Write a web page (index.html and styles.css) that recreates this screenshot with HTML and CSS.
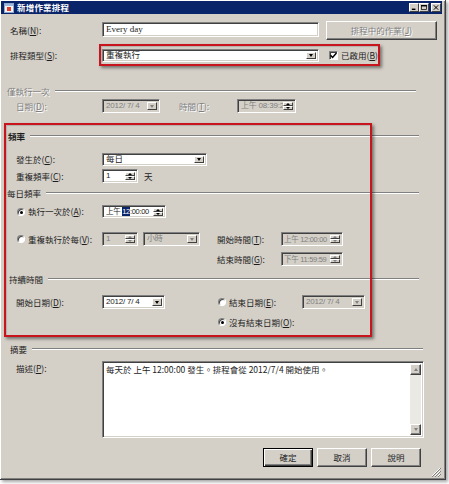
FILE: index.html
```html
<!DOCTYPE html>
<html lang="zh-Hant">
<head>
<meta charset="utf-8">
<title>新增作業排程</title>
<link rel="stylesheet" href="styles.css">
</head>
<body>
<div class="window">
  <div class="titlebar">
    <svg class="app-icon" width="10" height="10" viewBox="0 0 10 10">
      <rect x="0.5" y="0.5" width="9" height="9" fill="#f4f4f4" stroke="#8fa8d0"/>
      <rect x="1" y="1" width="8" height="2" fill="#9fb8e0"/>
      <rect x="3" y="4" width="4" height="4" fill="#e0402a"/>
    </svg>
    <span class="title">新增作業排程</span>
    <div class="caption">
      <span class="cap-btn"><svg width="8" height="7" viewBox="0 0 8 7"><rect x="1" y="5" width="5" height="2" fill="#000"/></svg></span>
      <span class="cap-btn"><svg width="8" height="7" viewBox="0 0 8 7"><rect x="0.5" y="0.5" width="7" height="6" fill="none" stroke="#000"/><rect x="0" y="0" width="8" height="2" fill="#000"/></svg></span>
      <span class="cap-btn close"><svg width="8" height="7" viewBox="0 0 8 7"><path d="M1 0.5 L7 6.5 M7 0.5 L1 6.5" stroke="#000" stroke-width="1.4"/></svg></span>
    </div>
  </div>

  <div class="client">
    <div class="row top r-name">
      <span class="lbl">名稱(<u>N</u>):</span>
      <div class="field name-field"><span class="serif">Every day</span></div>
      <span class="btn btn-jobs disabled">排程中的作業(<u>J</u>)</span>
    </div>

    <div class="row top r-type">
      <span class="lbl">排程類型(<u>S</u>):</span>
      <div class="field combo type-combo">
        <span class="val">重複執行</span>
        <span class="drop"><i class="tri"></i></span>
      </div>
      <span class="check checked">
        <svg width="7" height="7" viewBox="0 0 7 7"><path d="M0.5 3.2 L2.6 5.4 L6.5 1" fill="none" stroke="#000" stroke-width="1.5"/></svg>
      </span>
      <span class="check-text">已啟用(<u>B</u>)</span>
    </div>

    <div class="section s-once disabled">
      <span class="sec-title">僅執行一次</span><span class="rule"></span>
    </div>

    <div class="row r-once">
      <span class="lbl disabled">日期(<u>D</u>):</span>
      <div class="field combo off date-once">
        <span class="val">2012/ 7/ 4</span>
        <span class="drop"><i class="tri grey"></i></span>
      </div>
      <span class="lbl lbl-time disabled">時間(<u>T</u>):</span>
      <div class="field spin off time-once">
        <span class="val">上午 08:39:2</span>
        <span class="spin-btns"><span class="sb"><i class="up"></i></span><span class="sb"><i class="dn"></i></span></span>
      </div>
    </div>

    <div class="section s-freq">
      <span class="sec-title bold">頻率</span><span class="rule"></span>
    </div>

    <div class="row r-occurs">
      <span class="lbl">發生於(<u>C</u>):</span>
      <div class="field combo occurs-combo">
        <span class="val">每日</span>
        <span class="drop"><i class="tri"></i></span>
      </div>
    </div>

    <div class="row r-recur">
      <span class="lbl">重複頻率(<u>C</u>):</span>
      <div class="field spin num-spin">
        <span class="val">1</span>
        <span class="spin-btns"><span class="sb"><i class="up"></i></span><span class="sb"><i class="dn"></i></span></span>
      </div>
      <span class="unit">天</span>
    </div>

    <div class="section s-daily">
      <span class="sec-title">每日頻率</span><span class="rule"></span>
    </div>

    <div class="row r-at">
      <span class="lbl radio-lbl"><span class="radio checked"></span>執行一次於(<u>A</u>):</span>
      <div class="field spin at-time">
        <span class="val">上午 <span class="sel">12</span>:00:00</span>
        <span class="spin-btns"><span class="sb"><i class="up"></i></span><span class="sb"><i class="dn"></i></span></span>
      </div>
    </div>

    <div class="row r-every">
      <span class="lbl radio-lbl"><span class="radio"></span>重複執行於每(<u>V</u>):</span>
      <div class="field spin off num-spin">
        <span class="val">1</span>
        <span class="spin-btns"><span class="sb"><i class="up grey"></i></span><span class="sb"><i class="dn grey"></i></span></span>
      </div>
      <div class="field combo off unit-combo">
        <span class="val">小時</span>
        <span class="drop"><i class="tri grey"></i></span>
      </div>
      <span class="lbl lbl-range">開始時間(<u>T</u>):</span>
      <div class="field spin off range-time">
        <span class="val">上午 12:00:00</span>
        <span class="spin-btns"><span class="sb"><i class="up grey"></i></span><span class="sb"><i class="dn grey"></i></span></span>
      </div>
    </div>

    <div class="row r-end-time">
      <span class="lbl lbl-range">結束時間(<u>G</u>):</span>
      <div class="field spin off range-time">
        <span class="val">下午 11:59:59</span>
        <span class="spin-btns"><span class="sb"><i class="up grey"></i></span><span class="sb"><i class="dn grey"></i></span></span>
      </div>
    </div>

    <div class="section s-duration">
      <span class="sec-title">持續時間</span><span class="rule"></span>
    </div>

    <div class="row r-start">
      <span class="lbl">開始日期(<u>D</u>):</span>
      <div class="field combo date-combo">
        <span class="val">2012/ 7/ 4</span>
        <span class="drop"><i class="tri"></i></span>
      </div>
      <span class="radio-lbl end-lbl"><span class="radio"></span>結束日期(<u>E</u>):</span>
      <div class="field combo off date-combo">
        <span class="val">2012/ 7/ 4</span>
        <span class="drop"><i class="tri grey"></i></span>
      </div>
    </div>

    <div class="row r-noend">
      <span class="radio-lbl"><span class="radio checked"></span>沒有結束日期(<u>O</u>):</span>
    </div>

    <div class="section s-summary">
      <span class="sec-title">摘要</span><span class="rule"></span>
    </div>

    <div class="row r-desc">
      <span class="lbl desc-lbl">描述(<u>P</u>):</span>
      <div class="field memo">
        <p class="memo-text">每天於 上午 12:00:00 發生。排程會從 2012/7/4 開始使用。</p>
        <div class="vscroll">
          <span class="sbtn"><i class="up grey"></i></span>
          <span class="track"></span>
          <span class="sbtn"><i class="dn grey"></i></span>
        </div>
      </div>
    </div>

    <div class="row r-actions">
      <span class="btn btn-act default">確定</span>
      <span class="btn btn-act">取消</span>
      <span class="btn btn-act">說明</span>
    </div>
  </div>

  <!-- highlight frames drawn over the dialog -->
  <div class="mark mark-type"></div>
  <div class="mark mark-freq"></div>

  <svg class="grip" width="10" height="10" viewBox="0 0 10 10">
    <path d="M9 1 L1 9 M9 4 L4 9 M9 7 L7 9" stroke="#fff" stroke-width="1"/>
    <path d="M10 1 L1 10 M10 4 L4 10 M10 7 L7 10" stroke="#808080" stroke-width="1"/>
  </svg>
</div>
</body>
</html>
```
FILE: styles.css
```css
* { box-sizing: border-box; }

html, body {
  margin: 0;
  background: #fff;
}

body {
  width: 449px;
  height: 484px;
  overflow: hidden;
  font-family: "Noto Sans CJK TC", "Noto Sans", sans-serif;
  font-size: 8.5px;
  line-height: 1.2;
  color: #1c1c1c;
}

u { text-decoration: underline; text-underline-offset: 1px; }

/* ---------- window frame ---------- */
.window {
  position: relative;
  width: 446px;
  height: 480px;
  background: #d4d0c8;
  border-right: 1px solid #404040;
  border-bottom: 1px solid #404040;
  box-shadow: inset 1px 1px #fff, inset -1px -1px #808080, 2px 2px 3px rgba(0, 0, 0, 0.35);
  padding: 1px 3px 0 1px;
  display: flex;
  flex-direction: column;
}

.titlebar {
  height: 13px;
  flex: none;
  background: #0a246a;
  color: #fff;
  display: flex;
  align-items: center;
  padding-left: 3px;
}

.app-icon { flex: none; }

.title {
  margin-left: 3px;
  font-weight: bold;
  letter-spacing: 0.2px;
}

.caption {
  margin-left: auto;
  margin-right: 1px;
  display: flex;
}

.cap-btn {
  width: 10px;
  height: 9px;
  background: #d4d0c8;
  border: 1px solid;
  border-color: #fff #404040 #404040 #fff;
  display: flex;
  align-items: center;
  justify-content: center;
}

.cap-btn svg { width: 6px; height: 5px; }
.cap-btn.close { margin-left: 2px; }

/* ---------- layout ---------- */
.client {
  flex: 1;
  display: flex;
  flex-direction: column;
}

.row {
  display: flex;
  align-items: center;
  padding-left: 15px;
  flex: none;
}

.row.top { padding-left: 9px; }

.lbl {
  flex: none;
  width: 86px;
  white-space: nowrap;
}

.row.top .lbl { width: 92px; }

.disabled { color: #808080; text-shadow: 1px 1px 0 #fff; }

.section {
  display: flex;
  align-items: center;
  height: 12px;
  padding-left: 6px;
  padding-right: 23px;
  flex: none;
}

.sec-title { white-space: nowrap; }
.bold { font-weight: bold; }

.rule {
  flex: 1;
  margin-left: 5px;
  height: 2px;
  border-top: 1px solid #808080;
  border-bottom: 1px solid #fff;
}

/* vertical rhythm of the form */
.r-name { margin-top: 7px; height: 19px; }
.r-type { margin-top: 5px; height: 20px; }
.s-once { margin-top: 20px; padding-right: 26px; }
.r-once { margin-top: 2px; height: 14px; }
.s-freq { margin-top: 17px; padding-left: 7px; }
.r-occurs { margin-top: 11px; height: 13px; }
.r-recur { margin-top: 3px; height: 14px; }
.s-daily { margin-top: 4px; }
.r-at { margin-top: 6px; height: 13px; }
.r-every { margin-top: 14px; height: 14px; }
.r-end-time { margin-top: 6px; height: 14px; padding-left: 216px; }
.s-duration { margin-top: 7px; padding-left: 8px; }
.r-start { margin-top: 10px; height: 14px; }
.r-noend { margin-top: 6px; height: 14px; padding-left: 216px; }
.s-summary { margin-top: 14px; padding-left: 9px; padding-right: 19px; }
.r-desc { margin-top: 6px; height: 77px; align-items: flex-start; }
.r-actions { margin-top: 10px; height: 19px; justify-content: flex-end; padding-right: 21px; gap: 4px; }

/* ---------- controls ---------- */
.field {
  flex: none;
  display: flex;
  align-items: center;
  background: #fff;
  border: 1px solid;
  border-color: #808080 #fff #fff #808080;
  box-shadow: inset 1px 1px #404040, inset -1px -1px #d4d0c8;
  padding: 0 2px 0 3px;
  white-space: nowrap;
  overflow: hidden;
}

.field.off { background: #d4d0c8; color: #808080; }

.serif {
  font-family: "Liberation Serif", "Noto Sans CJK TC", serif;
  font-size: 9px;
}

.name-field { width: 217px; height: 15px; align-self: flex-start; margin-top: 1px; }

.btn {
  flex: none;
  height: 19px;
  display: flex;
  align-items: center;
  justify-content: center;
  background: #d4d0c8;
  border: 1px solid;
  border-color: #fff #404040 #404040 #fff;
  box-shadow: inset -1px -1px #808080;
}

.btn-jobs { width: 111px; margin-left: 7px; }
.btn-act { width: 50px; }

.btn.default {
  border-color: #000;
  box-shadow: inset 1px 1px #fff, inset -1px -1px #404040, inset -2px -2px #808080;
}

.combo { padding-right: 2px; }

.val {
  flex: 1;
  overflow: hidden;
  font-family: "Liberation Sans", "Noto Sans CJK TC", sans-serif;
  font-size: 8px;
  letter-spacing: -0.2px;
}

.drop {
  flex: none;
  width: 10px;
  margin: 2px 0;
  height: calc(100% - 4px);
  background: #d4d0c8;
  border: 1px solid;
  border-color: #fff #404040 #404040 #fff;
  display: flex;
  align-items: center;
  justify-content: center;
}

.tri, .dn, .up {
  display: block;
  width: 0;
  height: 0;
  border-left: 2.5px solid transparent;
  border-right: 2.5px solid transparent;
}

.tri, .dn { border-top: 3px solid #000; }
.up { border-bottom: 3px solid #000; }
.tri.grey, .dn.grey { border-top-color: #808080; }
.up.grey { border-bottom-color: #808080; }

.spin { padding-right: 2px; }

.spin-btns {
  flex: none;
  width: 10px;
  height: calc(100% - 4px);
  display: flex;
  flex-direction: column;
}

.sb {
  flex: 1;
  background: #d4d0c8;
  border: 1px solid;
  border-color: #fff #404040 #404040 #fff;
  display: flex;
  align-items: center;
  justify-content: center;
}

.sb .up, .sb .dn {
  border-left-width: 2px;
  border-right-width: 2px;
}
.sb .up { border-bottom-width: 2px; }
.sb .dn { border-top-width: 2px; }

.type-combo { width: 217px; height: 13px; }
.type-combo .val, .occurs-combo .val { font-size: 8.5px; letter-spacing: 0; }
.date-once { width: 58px; height: 14px; }
.lbl-time { width: 58px; margin-left: 19px; }
.time-once { width: 59px; height: 14px; }
.occurs-combo { width: 105px; height: 13px; }
.num-spin { width: 36px; height: 14px; }
.unit { margin-left: 6px; }
.at-time { width: 64px; height: 13px; }
.unit-combo { width: 57px; height: 14px; margin-left: 5px; }
.lbl-range { width: 64px; }
.r-every .lbl-range { margin-left: 17px; }
.range-time { width: 62px; height: 14px; padding-left: 2px; }
.range-time .val, .at-time .val {
  font-size: 7.5px;
  letter-spacing: -0.3px;
}
.date-combo { width: 63px; height: 14px; }

.sel {
  background: #0a246a;
  color: #fff;
}

.check {
  flex: none;
  width: 9px;
  height: 9px;
  margin-left: 10px;
  background: #fff;
  border: 1px solid;
  border-color: #808080 #fff #fff #808080;
  box-shadow: inset 1px 1px #404040;
  display: flex;
  align-items: center;
  justify-content: center;
}

.check-text { margin-left: 3px; white-space: nowrap; }

.radio-lbl {
  display: flex;
  align-items: center;
  white-space: nowrap;
}

.radio {
  flex: none;
  width: 8px;
  height: 8px;
  margin: 0 3px 0 1px;
  border-radius: 50%;
  background: #fff;
  border: 1px solid;
  border-color: #808080 #fff #fff #808080;
  box-shadow: inset 1px 1px #404040;
  position: relative;
}

.radio.checked::after {
  content: "";
  position: absolute;
  left: 2px;
  top: 2px;
  width: 3px;
  height: 3px;
  border-radius: 50%;
  background: #000;
}

.end-lbl { width: 85px; margin-left: 52px; flex: none; }

.desc-lbl { margin-top: 2px; }

.memo {
  width: 322px;
  height: 77px;
  align-items: stretch;
  padding: 2px 2px 2px 3px;
}

.memo-text {
  flex: 1;
  margin: 0;
  line-height: 11px;
}

.vscroll {
  flex: none;
  width: 11px;
  display: flex;
  flex-direction: column;
}

.sbtn {
  flex: none;
  height: 11px;
  background: #d4d0c8;
  border: 1px solid;
  border-color: #fff #404040 #404040 #fff;
  box-shadow: inset -1px -1px #808080;
  display: flex;
  align-items: center;
  justify-content: center;
}

.track {
  flex: 1;
  background: #ebe9e4;
}

/* ---------- overlays ---------- */
.mark {
  position: absolute;
  border: 2px solid #c8141c;
  box-shadow: 2px 2px 3px rgba(0, 0, 0, 0.45), inset 1px 1px 1px rgba(0, 0, 0, 0.15);
  pointer-events: none;
}

.mark-type { left: 99px; top: 44px; width: 281px; height: 22px; }
.mark-freq { left: 4px; top: 123px; width: 368px; height: 214px; }

.grip {
  position: absolute;
  right: 4px;
  bottom: 2px;
}
```
